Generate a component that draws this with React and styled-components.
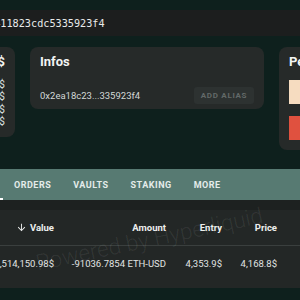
import styled, { createGlobalStyle } from "styled-components";

const Global = createGlobalStyle`
  body {
    margin: 0;
    background: #0e201d;
    font-family: Roboto, "Liberation Sans", sans-serif;
    color: #e6e9e8;
  }
`;

const Page = styled.div`
  position: relative;
  width: 300px;
  height: 300px;
  overflow: hidden;
  padding-top: 10px;
  box-sizing: border-box;
  background: #0e201d;
`;

const AddressBar = styled.div`
  height: 26px;
  display: flex;
  align-items: center;
  background: #1c1e1e;
  overflow: hidden;
`;

const Address = styled.div`
  margin-left: -153px;
  white-space: nowrap;
  font-family: "DejaVu Sans Mono", "Liberation Mono", monospace;
  font-size: 10.2px;
  color: #e8eaea;
`;

const Cards = styled.div`
  display: flex;
  align-items: flex-start;
  gap: 15px;
  margin-top: 11px;
  margin-left: -105px;
`;

const Card = styled.div`
  flex: 0 0 ${(p) => p.$width}px;
  height: ${(p) => p.$height}px;
  box-sizing: border-box;
  background: #262a29;
  border-radius: 8px;
  padding: 7px 10px;
`;

const CardTitle = styled.div`
  font-size: 13px;
  font-weight: 700;
  line-height: 16px;
  color: #f2f4f3;
  white-space: nowrap;
`;

const SideList = styled(Card)`
  text-align: right;
`;

const SideRows = styled.div`
  margin-top: 9px;
`;

const SideRow = styled.div`
  font-size: 10px;
  line-height: 12.3px;
  color: #dfe3e2;
  white-space: nowrap;
`;

const AddressRow = styled.div`
  display: flex;
  align-items: center;
  justify-content: space-between;
  margin-top: 17px;
`;

const ShortAddress = styled.span`
  font-size: 9.5px;
  color: #d3d8d7;
`;

const AliasButton = styled.button`
  width: 60px;
  height: 17px;
  border: 0;
  border-radius: 3px;
  background: #2d3231;
  color: #626968;
  font-family: Roboto, sans-serif;
  font-size: 8px;
  font-weight: 700;
  letter-spacing: 0.7px;
  padding: 0;
`;

const Swatch = styled.div`
  height: 24px;
  background: ${(p) => p.$color};
  margin-top: ${(p) => p.$gap}px;
`;

const Tabs = styled.div`
  display: flex;
  height: 31px;
  margin-top: 19px;
  background: #577a72;
  overflow: hidden;
`;

const Tab = styled.div`
  flex: ${(p) => (p.$width ? `0 0 ${p.$width}px` : "0 0 auto")};
  margin-left: ${(p) => p.$offset || 0}px;
  display: flex;
  align-items: center;
  justify-content: center;
  padding: 0 11px;
  box-sizing: border-box;
  font-size: 9px;
  font-weight: 700;
  letter-spacing: 0.5px;
  color: #e4ecea;
  border-bottom: 2px solid ${(p) => (p.$active ? "#ffffff" : "transparent")};
  border-top: 2px solid transparent;
`;

const Table = styled.div`
  height: 88px;
  box-sizing: border-box;
  background: #232726;
  border-top: 10px solid #1d2120;
  overflow: hidden;
`;

const Row = styled.div`
  display: grid;
  grid-template-columns: 154px 112px 56px 55px 123px;
  align-items: center;
  width: 500px;
  height: ${(p) => p.$height}px;
  margin-left: -100px;
  border-bottom: ${(p) => (p.$head ? "1px solid #3a3f3e" : "none")};
`;

const Cell = styled.div`
  display: flex;
  justify-content: flex-end;
  align-items: center;
  gap: 3px;
  white-space: nowrap;
  font-size: 9.5px;
  font-weight: ${(p) => (p.$head ? 700 : 400)};
  color: ${(p) => (p.$head ? "#eceeed" : "#e1e4e3")};
`;

const Watermark = styled.div`
  position: absolute;
  left: 36px;
  top: 250px;
  transform: rotate(-12deg);
  transform-origin: left center;
  font-size: 22.5px;
  font-weight: 300;
  color: rgba(255, 255, 255, 0.08);
  white-space: nowrap;
  pointer-events: none;
`;

function SortArrow() {
  return (
    <svg width="11" height="11" viewBox="0 0 24 24" fill="#eceeed">
      <path d="M20 12l-1.41-1.41L13 16.17V4h-2v12.17l-5.58-5.59L4 12l8 8 8-8z" />
    </svg>
  );
}

const tabs = ["ORDERS", "VAULTS", "STAKING", "MORE"];

export default function App() {
  return (
    <>
      <Global />
      <Page>
        <AddressBar>
          <Address>0x2ea18c23f72a4b6172c55b411823cdc5335923f4</Address>
        </AddressBar>

        <Cards>
          <SideList $width={120} $height={90}>
            <CardTitle>379,514,150.98$</CardTitle>
            <SideRows>
              <SideRow>0.00$</SideRow>
              <SideRow>0.00$</SideRow>
              <SideRow>12,880.41$</SideRow>
              <SideRow>1,004.27$</SideRow>
            </SideRows>
          </SideList>

          <Card $width={234} $height={62}>
            <CardTitle>Infos</CardTitle>
            <AddressRow>
              <ShortAddress>0x2ea18c23...335923f4</ShortAddress>
              <AliasButton>ADD ALIAS</AliasButton>
            </AddressRow>
          </Card>

          <Card $width={120} $height={103}>
            <CardTitle>Performance</CardTitle>
            <Swatch $color="#f6dcc0" $gap={10} />
            <Swatch $color="#e0513f" $gap={12} />
          </Card>
        </Cards>

        <Tabs>
          <Tab $width={103} $offset={-100} $active>
            POSITIONS
          </Tab>
          {tabs.map((t) => (
            <Tab key={t}>{t}</Tab>
          ))}
        </Tabs>

        <Table>
          <Row $head $height={35}>
            <Cell $head>
              <SortArrow />
              Value
            </Cell>
            <Cell $head>Amount</Cell>
            <Cell $head>Entry</Cell>
            <Cell $head>Price</Cell>
            <Cell $head>PnL</Cell>
          </Row>
          <Row $height={34}>
            <Cell>379,514,150.98$</Cell>
            <Cell>-91036.7854 ETH-USD</Cell>
            <Cell>4,353.9$</Cell>
            <Cell>4,168.8$</Cell>
            <Cell>16,865,713.2$</Cell>
          </Row>
        </Table>

        <Watermark>Powered by Hyperliquid</Watermark>
      </Page>
    </>
  );
}
